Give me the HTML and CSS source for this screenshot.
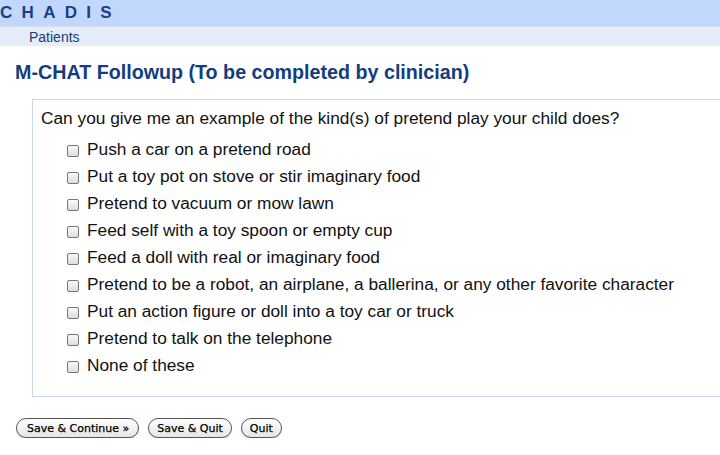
FILE: index.html
```html
<!DOCTYPE html>
<html>
<head>
<meta charset="utf-8">
<link rel="stylesheet" href="styles.css">
</head>
<body>
<div class="topbar"><span class="brand">CHADIS</span></div>
<div class="subbar"><a class="navlink">Patients</a></div>
<h1 class="title">M-CHAT Followup (To be completed by clinician)</h1>
<div class="panel">
  <p class="question">Can you give me an example of the kind(s) of pretend play your child does?</p>
  <ul class="options">
    <li><span class="cb"></span>Push a car on a pretend road</li>
    <li><span class="cb"></span>Put a toy pot on stove or stir imaginary food</li>
    <li><span class="cb"></span>Pretend to vacuum or mow lawn</li>
    <li><span class="cb"></span>Feed self with a toy spoon or empty cup</li>
    <li><span class="cb"></span>Feed a doll with real or imaginary food</li>
    <li><span class="cb"></span>Pretend to be a robot, an airplane, a ballerina, or any other favorite character</li>
    <li><span class="cb"></span>Put an action figure or doll into a toy car or truck</li>
    <li><span class="cb"></span>Pretend to talk on the telephone</li>
    <li><span class="cb"></span>None of these</li>
  </ul>
</div>
<div class="actions">
  <button class="btn btn-wide">Save &amp; Continue »</button>
  <button class="btn">Save &amp; Quit</button>
  <button class="btn">Quit</button>
</div>
</body>
</html>
```
FILE: styles.css
```css
html, body {
  margin: 0;
  padding: 0;
  background: #fff;
  font-family: "Liberation Sans", Arial, sans-serif;
  overflow: hidden;
}
.topbar {
  height: 26px;
  background: #c1d7fb;
  display: flex;
  align-items: center;
}
.brand {
  font-weight: bold;
  font-size: 17px;
  letter-spacing: 9.3px;
  color: #1b3f86;
  margin-left: 0;
  line-height: 1;
  margin-top: -1px;
}
.subbar {
  height: 19px;
  background: #e6edf9;
  border-top: 1px solid #d2dff3;
  padding-left: 29px;
  display: flex;
  align-items: center;
}
.navlink {
  font-size: 14px;
  color: #1b3a78;
}
.title {
  margin: 15px 0 0 15px;
  font-size: 19.7px;
  font-weight: bold;
  color: #123d80;
  line-height: 22px;
}
.panel {
  margin: 16px 0 0 32px;
  border: 1px solid #c9d8f2;
  border-right: none;
  height: 298px;
  box-sizing: border-box;
  padding: 8px 0 0 8px;
}
.question {
  margin: 0;
  font-size: 17.3px;
  line-height: 20px;
  color: #111;
}
.options {
  list-style: none;
  margin: 8px 0 0 0;
  padding: 0 0 0 26px;
}
.options li {
  display: flex;
  align-items: center;
  height: 27px;
  font-size: 17.3px;
  color: #111;
}
.cb {
  width: 10px;
  height: 10px;
  border: 1px solid #777;
  border-radius: 2px;
  background: linear-gradient(#fafafa, #ddd);
  margin-right: 8px;
  margin-top: 3px;
  flex: none;
}
.actions {
  display: flex;
  gap: 9px;
  margin: 21px 0 0 16px;
}
.btn {
  font-family: "DejaVu Sans", sans-serif;
  font-size: 11px;
  color: #000;
  height: 20px;
  padding: 0 8px;
  border: 1px solid #555;
  border-radius: 10px;
  background: linear-gradient(#fff, #e6e6e6);
  box-shadow: 0 1px 1px rgba(0,0,0,0.2);
  -webkit-text-stroke: 0.25px #000;
}
.btn-wide {
  padding: 0 9px 0 10px;
}
```
